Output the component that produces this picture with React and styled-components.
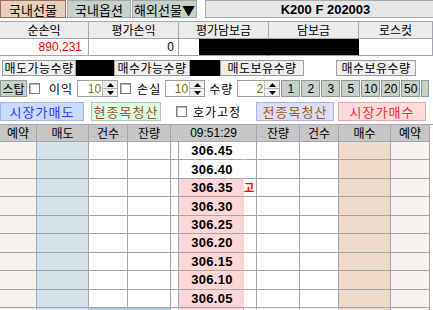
import React from 'react';
import styled, { createGlobalStyle } from 'styled-components';

const KR = `"Noto Sans CJK KR", "Liberation Sans", sans-serif`;
const NUM = `"Liberation Sans", "Noto Sans CJK KR", sans-serif`;
const LINE = '#a4a4b4';

const GlobalStyle = createGlobalStyle`
  body { margin: 0; background: #fff; }
  * { box-sizing: border-box; }
`;

const Screen = styled.div`
  width: 433px;
  height: 310px;
  overflow: hidden;
  font-family: ${KR};
  font-size: 12px;
  color: #000;
  display: flex;
  flex-direction: column;
`;

/* ---- top tabs ---- */
const TopBar = styled.div`
  display: flex;
  align-items: flex-end;
  height: 20px;
  gap: 1px;
`;

const Tab = styled.div`
  width: ${p => p.$w}px;
  height: 18px;
  display: flex;
  align-items: center;
  justify-content: center;
  font-size: 13px;
  line-height: 1;
  border: 1px solid ${p => (p.$active ? '#9c6e60' : '#a0aaa4')};
  background: ${p => (p.$active ? '#e8d0bd' : '#c7d1ca')};
  margin-right: ${p => p.$mr || 0}px;
`;

const Title = styled.div`
  flex: 1;
  height: 18px;
  display: flex;
  align-items: center;
  justify-content: center;
  font-family: ${NUM};
  font-weight: bold;
  font-size: 13px;
  padding-left: 12px;
  background: #e6e6e6;
  border: 1px solid #a8a8a8;
  border-right: none;
`;

/* ---- summary ---- */
const Summary = styled.div`
  margin-top: 3px;
  display: grid;
  grid-template-columns: 89px 90px 90px 90px 1fr;
  border-top: 1px solid ${LINE};
`;

const SumHead = styled.div`
  height: 17px;
  display: flex;
  align-items: center;
  justify-content: center;
  background: #ebebeb;
  border-right: 1px solid ${LINE};
  border-bottom: 1px solid ${LINE};
  line-height: 1;
`;

const SumValue = styled.div`
  height: 17px;
  display: flex;
  align-items: center;
  justify-content: flex-end;
  padding-right: ${p => p.$pr ?? 5}px;
  font-family: ${NUM};
  font-size: 12px;
  color: ${p => p.$color || '#000'};
  background: ${p => (p.$mask ? '#000' : '#fff')};
  border-right: 1px solid ${p => (p.$mask || p.$maskEdge ? '#000' : LINE)};
  border-bottom: 1px solid ${LINE};
`;

const MaskBlock = styled.span`
  width: ${p => p.$w}px;
  height: 100%;
  background: #000;
`;

/* ---- quantities row ---- */
const QtyRow = styled.div`
  margin-top: 4px;
  height: 16px;
  display: flex;
  padding-left: 2px;
`;

const QtyLabel = styled.div`
  width: ${p => p.$w}px;
  height: 16px;
  display: flex;
  align-items: center;
  justify-content: center;
  background: #efefef;
  border: 1px solid #a0a0a0;
  letter-spacing: 0.5px;
  line-height: 1;
`;

const QtyValue = styled.div`
  width: ${p => p.$w}px;
  height: 16px;
  background: ${p => (p.$mask ? '#000' : '#fff')};
  flex: ${p => (p.$grow ? 1 : 'none')};
`;

/* ---- control row ---- */
const ControlRow = styled.div`
  margin-top: 4px;
  height: 17px;
  display: flex;
  align-items: center;
`;

const GrayBtn = styled.div`
  width: ${p => p.$w}px;
  height: 17px;
  display: flex;
  align-items: center;
  justify-content: ${p => (p.$clip ? 'flex-start' : 'center')};
  padding-left: ${p => (p.$clip ? 5 : 0)}px;
  overflow: hidden;
  background: #c7d1ca;
  border: 1px solid #8e9a92;
  font-family: ${p => (p.$num ? NUM : KR)};
  font-size: 12px;
  line-height: 1;
  flex: none;
`;

const Check = styled.span`
  width: 11px;
  height: 11px;
  border: 1px solid #808080;
  background: #fff;
  box-shadow: inset 1px 1px 0 #b8b8b8;
  margin: 0 ${p => p.$mr ?? 8}px 0 ${p => p.$ml ?? 3}px;
  flex: none;
`;

const Label = styled.span`
  line-height: 1;
  font-size: 12px;
  margin-left: ${p => p.$ml ?? 0}px;
  margin-right: ${p => p.$mr ?? 4}px;
  width: ${p => (p.$w ? `${p.$w}px` : 'auto')};
  letter-spacing: 1px;
  flex: none;
`;

const Spin = styled.div`
  width: ${p => p.$w}px;
  height: 17px;
  display: flex;
  border: 1px solid #a0a0a0;
  background: #fff;
  flex: none;
`;

const SpinValue = styled.div`
  flex: 1;
  display: flex;
  align-items: center;
  justify-content: flex-end;
  padding-right: 1px;
  font-family: ${NUM};
  font-size: 12px;
  color: #807000;
`;

const SpinArrows = styled.div`
  width: 15px;
  display: flex;
  flex-direction: column;
  border-left: 1px solid #c0c0c0;
`;

const SpinArrow = styled.div`
  flex: 1;
  display: flex;
  align-items: center;
  justify-content: center;
  background: #f0f0f0;
  & + & { border-top: 1px solid #b0b0b0; }
`;

const NumGroup = styled.div`
  display: flex;
  gap: 1px;
  margin-left: 1px;
`;

/* ---- action row ---- */
const ActionRow = styled.div`
  margin-top: 5px;
  height: 19px;
  display: flex;
  align-items: center;
`;

const ActionBtn = styled.div`
  width: ${p => p.$w}px;
  height: 19px;
  display: flex;
  align-items: center;
  justify-content: center;
  font-size: 13px;
  letter-spacing: 1px;
  line-height: 1;
  color: ${p => p.$color};
  background: ${p => p.$bg};
  border: 1px solid ${p => p.$border};
  margin-right: ${p => p.$mr ?? 0}px;
  flex: none;
`;

/* ---- order book ---- */
const Book = styled.div`
  margin-top: 3px;
  display: grid;
  grid-template-columns: 37px 52px 39px 43px 8px 65px 13px 43px 39px 52px 39px;
  grid-template-rows: 17px;
  grid-auto-rows: 18.45px;
  border-top: 1px solid ${LINE};
`;

const HeadCell = styled.div`
  grid-column: span ${p => p.$span || 1};
  display: flex;
  align-items: center;
  justify-content: center;
  background: #c6c6c6;
  border-right: 1px solid ${LINE};
  border-bottom: 1px solid ${LINE};
  font-family: ${p => (p.$num ? NUM : KR)};
  line-height: 1;
`;

const Cell = styled.div`
  display: flex;
  align-items: center;
  justify-content: center;
  background: ${p => p.$bg || '#fff'};
  border-right: 1px solid ${p => (p.$open ? 'transparent' : LINE)};
  border-bottom: 1px solid ${LINE};
`;

const Price = styled.span`
  font-family: ${NUM};
  font-weight: bold;
  font-size: 13px;
  letter-spacing: 0.3px;
  padding-left: 2px;
`;

const Marker = styled.span`
  color: #f00;
  font-weight: bold;
  font-size: 11px;
  line-height: 1;
  margin-left: -2px;
`;

const Triangle = ({ down }) => (
  <svg width="7" height="4" viewBox="0 0 7 4">
    <path d={down ? 'M0 0H7L3.5 4Z' : 'M0 4H7L3.5 0Z'} fill="#000" />
  </svg>
);

const Spinner = ({ w, value }) => (
  <Spin $w={w}>
    <SpinValue>{value}</SpinValue>
    <SpinArrows>
      <SpinArrow><Triangle /></SpinArrow>
      <SpinArrow><Triangle down /></SpinArrow>
    </SpinArrows>
  </Spin>
);

const prices = ['306.45', '306.40', '306.35', '306.30', '306.25', '306.20', '306.15', '306.10', '306.05'];
const COL_BG = ['#f6f2ee', '#d3e2e8', null, null, null, null, null, null, null, '#f0dbc8', '#f6f2ee'];
const QTY_STEPS = ['1', '2', '3', '5', '10', '20', '50'];

export default function App() {
  return (
    <Screen>
      <GlobalStyle />
      <TopBar>
        <Tab $w={66} $active>국내선물</Tab>
        <Tab $w={64}>국내옵션</Tab>
        <Tab $w={65} $mr={7}>해외선물▼</Tab>
        <Title>K200 F 202003</Title>
      </TopBar>

      <Summary>
        <SumHead>순손익</SumHead>
        <SumHead>평가손익</SumHead>
        <SumHead>평가담보금</SumHead>
        <SumHead>담보금</SumHead>
        <SumHead>로스컷</SumHead>
        <SumValue $color="#f00" $pr={6}>890,231</SumValue>
        <SumValue $pr={4}>0</SumValue>
        <SumValue $pr={0} $maskEdge><MaskBlock $w={69} /></SumValue>
        <SumValue $mask />
        <SumValue />
      </Summary>

      <QtyRow>
        <QtyLabel $w={74}>매도가능수량</QtyLabel>
        <QtyValue $w={38} $mask />
        <QtyLabel $w={76}>매수가능수량</QtyLabel>
        <QtyValue $w={30} $mask />
        <QtyLabel $w={84}>매도보유수량</QtyLabel>
        <QtyValue $w={32} />
        <QtyLabel $w={80}>매수보유수량</QtyLabel>
        <QtyValue $grow />
      </QtyRow>

      <ControlRow>
        <GrayBtn $w={27}>스탑</GrayBtn>
        <Check $ml={2} $mr={9} />
        <Label $mr={4}>이익</Label>
        <Spinner w={41} value="10" />
        <Check $ml={2} $mr={6} />
        <Label $mr={4}>손실</Label>
        <Spinner w={40} value="10" />
        <Label $ml={4} $mr={4}>수량</Label>
        <Spinner w={43} value="2" />
        <NumGroup>
          {QTY_STEPS.map(n => (
            <GrayBtn key={n} $w={19} $num>{n}</GrayBtn>
          ))}
          <GrayBtn $w={8} $num $clip>1</GrayBtn>
        </NumGroup>
      </ControlRow>

      <ActionRow>
        <ActionBtn $w={84} $mr={7} $bg="#c9dcff" $border="#a8b8d8" $color="#1f3cff">시장가매도</ActionBtn>
        <ActionBtn $w={70} $bg="#d9fbe8" $border="#a4cbb4" $color="#a05a10">현종목청산</ActionBtn>
        <Check $ml={15} $mr={6} />
        <Label $mr={0} $w={63}>호가고정</Label>
        <ActionBtn $w={78} $mr={4} $bg="#dcdcfc" $border="#b0b0d8" $color="#a05a10">전종목청산</ActionBtn>
        <ActionBtn $w={88} $bg="#ffdcdc" $border="#e0a8a8" $color="#ff2a2a">시장가매수</ActionBtn>
      </ActionRow>

      <Book>
        <HeadCell>예약</HeadCell>
        <HeadCell>매도</HeadCell>
        <HeadCell>건수</HeadCell>
        <HeadCell>잔량</HeadCell>
        <HeadCell $span={3} $num>09:51:29</HeadCell>
        <HeadCell>잔량</HeadCell>
        <HeadCell>건수</HeadCell>
        <HeadCell>매수</HeadCell>
        <HeadCell>예약</HeadCell>
        {prices.map((p, i) => {
          const hot = i >= 2;
          return (
            <React.Fragment key={p}>
              {COL_BG.map((bg, c) => {
                if (c === 5) {
                  return (
                    <Cell key={c} $bg={hot ? '#ffd6d6' : '#fff'} $open>
                      <Price>{p}</Price>
                    </Cell>
                  );
                }
                if (c === 6) {
                  return <Cell key={c}>{i === 2 && <Marker>고</Marker>}</Cell>;
                }
                return <Cell key={c} $bg={bg} />;
              })}
            </React.Fragment>
          );
        })}
        {COL_BG.map((bg, c) => (
          <Cell key={`f${c}`} $bg={c === 2 || c === 3 ? '#a9d3e4' : c === 5 ? '#ffd6d6' : bg} />
        ))}
      </Book>
    </Screen>
  );
}
